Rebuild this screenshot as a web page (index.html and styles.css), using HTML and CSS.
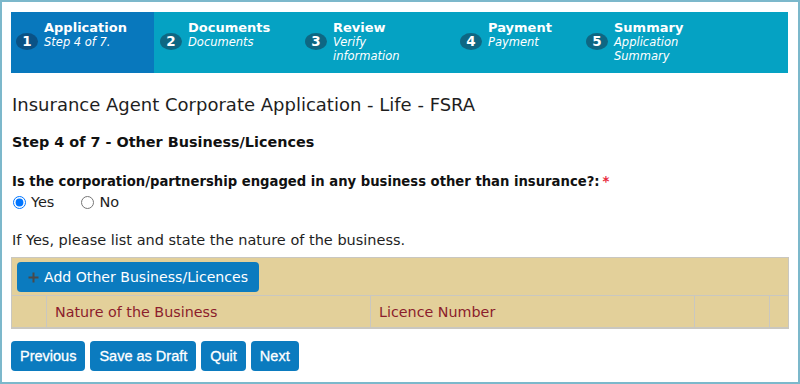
FILE: index.html
```html
<!DOCTYPE html>
<html lang="en">
<head>
<meta charset="utf-8">
<title>Insurance Agent Corporate Application - Life - FSRA</title>
<link rel="stylesheet" href="styles.css">
</head>
<body>
<div class="frame">
  <div class="wizard">
    <div class="step step-1 active">
      <span class="num">1</span>
      <div class="lbl"><span class="lbl-title">Application</span><span class="lbl-sub">Step 4 of 7.</span></div>
    </div>
    <div class="step step-2">
      <span class="num">2</span>
      <div class="lbl"><span class="lbl-title">Documents</span><span class="lbl-sub">Documents</span></div>
    </div>
    <div class="step step-3">
      <span class="num">3</span>
      <div class="lbl"><span class="lbl-title">Review</span><span class="lbl-sub">Verify information</span></div>
    </div>
    <div class="step step-4">
      <span class="num">4</span>
      <div class="lbl"><span class="lbl-title">Payment</span><span class="lbl-sub">Payment</span></div>
    </div>
    <div class="step step-5">
      <span class="num">5</span>
      <div class="lbl"><span class="lbl-title">Summary</span><span class="lbl-sub">Application Summary</span></div>
    </div>
  </div>

  <h1 class="page-title">Insurance Agent Corporate Application - Life - FSRA</h1>
  <h2 class="step-title">Step 4 of 7 - Other Business/Licences</h2>

  <div class="question">Is the corporation/partnership engaged in any business other than insurance?:<span class="req">*</span></div>
  <div class="radios">
    <label class="radio"><input type="radio" name="other" checked><span>Yes</span></label>
    <label class="radio"><input type="radio" name="other"><span>No</span></label>
  </div>

  <p class="hint">If Yes, please list and state the nature of the business.</p>

  <table class="grid">
    <colgroup>
      <col class="c-sel"><col class="c-nature"><col class="c-lic"><col class="c-x"><col class="c-y">
    </colgroup>
    <tr class="toolbar">
      <td colspan="5">
        <button class="add-btn" type="button">
          <svg class="plus" width="11" height="11" viewBox="0 0 11 11" aria-hidden="true"><path d="M5.5 0.5v10M0.5 5.5h10" stroke="#4a4a4a" stroke-width="2" fill="none"/></svg>
          <span>Add Other Business/Licences</span>
        </button>
      </td>
    </tr>
    <tr class="head">
      <th></th>
      <th>Nature of the Business</th>
      <th>Licence Number</th>
      <th></th>
      <th></th>
    </tr>
  </table>

  <div class="actions">
    <button class="btn" type="button">Previous</button>
    <button class="btn" type="button">Save as Draft</button>
    <button class="btn" type="button">Quit</button>
    <button class="btn" type="button">Next</button>
  </div>
</div>
</body>
</html>
```

FILE: styles.css
```css
* { box-sizing: border-box; }

html, body {
  margin: 0;
  padding: 0;
  background: #ffffff;
}

body {
  font-family: "DejaVu Sans", Verdana, sans-serif;
  color: #1e1e1e;
  font-size: 14.5px;
}

.frame {
  width: 800px;
  height: 384px;
  border: 2px solid #7cb8cb;
  padding: 10px 10px 0 9px;
  overflow: hidden;
}

/* ---------- wizard ---------- */
.wizard {
  display: flex;
  height: 61px;
  background: #05a2c3;
  color: #ffffff;
}

.step {
  display: flex;
  align-items: flex-start;
  gap: 6px;
  padding: 8px 0 0 6px;
}

.step-1 { width: 143px; padding-left: 5px; }
.step-2 { width: 145px; }
.step-3 { width: 155px; }
.step-4 { width: 126px; }
.step-5 { flex: 1; }

.step.active { background: #0878bd; }

.num {
  flex: none;
  width: 22px;
  height: 17px;
  margin-top: 13px;
  border-radius: 50%;
  background: #0e6783;
  color: #ffffff;
  font-weight: bold;
  font-size: 13.5px;
  line-height: 17px;
  text-align: center;
}

.active .num { background: #0a5286; }

.lbl {
  display: flex;
  flex-direction: column;
  max-width: 95px;
}

.lbl-title {
  font-weight: bold;
  font-size: 13px;
  line-height: 15px;
}

.lbl-sub {
  font-style: italic;
  font-size: 11.5px;
  line-height: 14px;
}

/* ---------- headings ---------- */
.page-title {
  margin: 20px 0 0 1px;
  font-size: 18px;
  font-weight: normal;
  line-height: 24px;
  color: #1e1e1e;
}

.step-title {
  margin: 16px 0 0 1px;
  font-size: 14.4px;
  font-weight: bold;
  line-height: 18px;
  color: #111111;
}

.question {
  margin: 22px 0 0 1px;
  font-size: 13.2px;
  font-weight: bold;
  line-height: 18px;
  color: #111111;
}

.req {
  color: #e8283c;
  font-weight: bold;
  margin-left: 3px;
}

.radios {
  display: flex;
  gap: 27px;
  height: 20px;
  align-items: center;
  margin-top: 1px;
  padding-left: 2px;
}

.radio {
  display: inline-flex;
  align-items: center;
  gap: 5px;
  line-height: 20px;
}

.radio input {
  margin: 0;
  width: 13px;
  height: 13px;
}

.hint {
  margin: 19px 0 0 1px;
  line-height: 18px;
}

/* ---------- grid ---------- */
.grid {
  margin-top: 8px;
  width: 777px;
  border-collapse: collapse;
  background: #e3d09a;
  border: 1px solid #c9c7c0;
  border-bottom-width: 2px;
  table-layout: fixed;
}

.c-sel { width: 35px; }
.c-nature { width: 324px; }
.c-lic { width: 324px; }
.c-x { width: 75px; }
.c-y { width: 19px; }

.toolbar td {
  padding: 4px 5px 3px 5px;
  border-bottom: 1px solid #c9c7c0;
}

.add-btn {
  display: inline-flex;
  align-items: center;
  gap: 5px;
  height: 30px;
  padding: 0 11px 0 11px;
  border: 0;
  border-radius: 4px;
  background: #0b7bbf;
  color: #ffffff;
  font-family: "DejaVu Sans", Verdana, sans-serif;
  font-size: 14.1px;
}

.head th {
  height: 32px;
  padding: 2px 8px 0 8px;
  border-left: 1px solid #c9c7c0;
  text-align: left;
  font-weight: normal;
  font-size: 14.3px;
  color: #8b1d2c;
}

.head th:first-child { border-left: 0; }

/* ---------- actions ---------- */
.actions {
  display: flex;
  gap: 5px;
  margin-top: 12px;
}

.btn {
  height: 30px;
  padding: 0 9px;
  border: 0;
  border-radius: 4px;
  background: #0b7bbf;
  color: #ffffff;
  font-family: "Liberation Sans", Arial, sans-serif;
  font-size: 14.5px;
  -webkit-text-stroke: 0.3px #ffffff;
}
```
